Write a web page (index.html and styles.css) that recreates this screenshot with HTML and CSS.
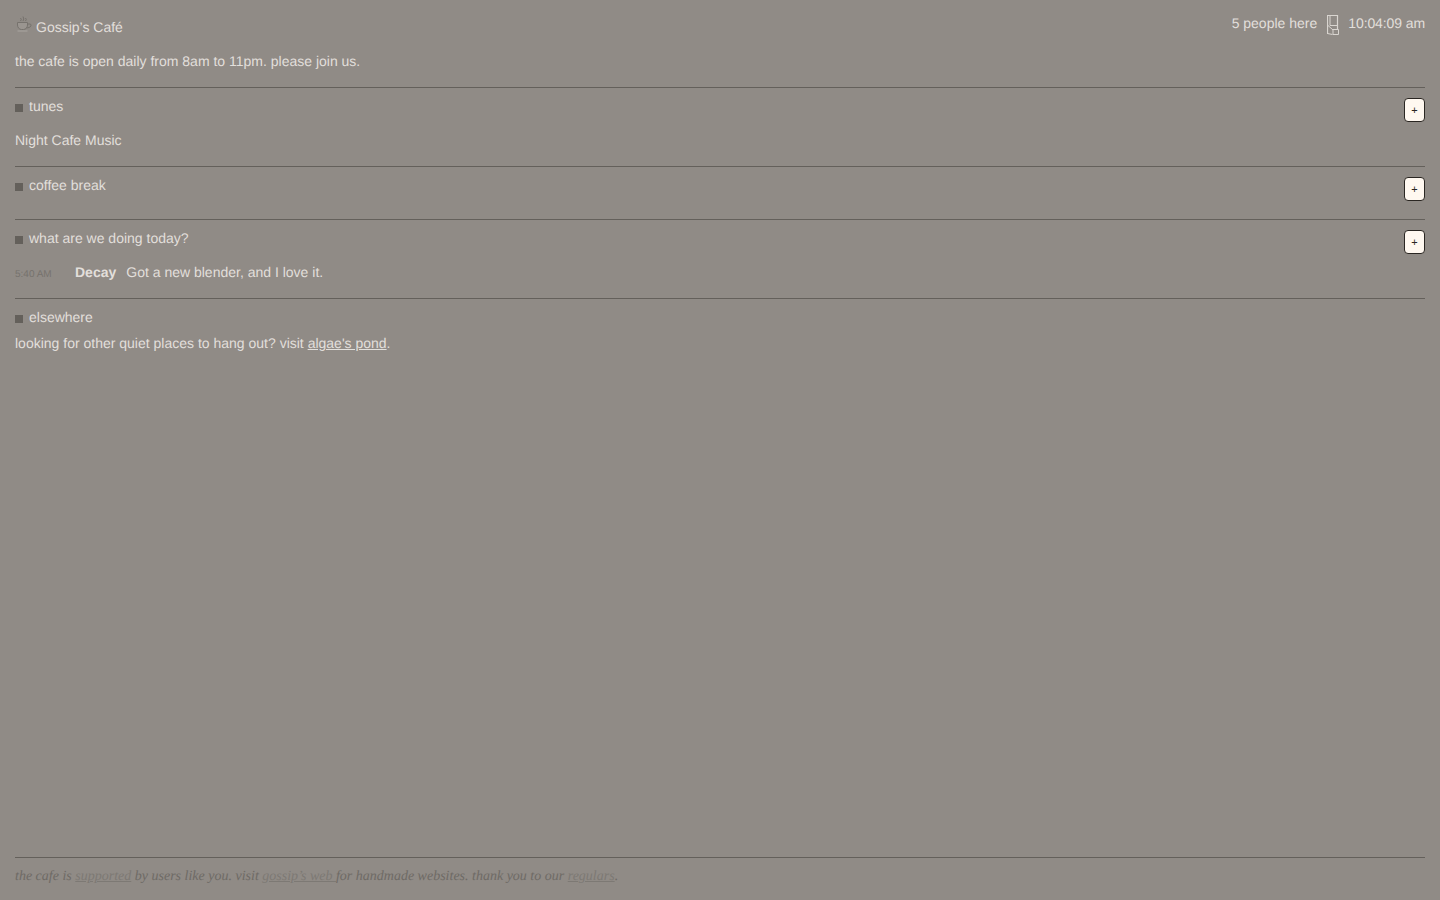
FILE: index.html
```html
<!DOCTYPE html>
<html lang="en">
<head>
    <meta charset="UTF-8">
    <title>Gossip's Café</title>
    <link rel="stylesheet" href="styles.css">
</head>
<body>
    <div class="page">
        <header class="top">
            <div class="brand">
                <svg class="cup" width="17" height="17" viewBox="0 0 17 17" fill="none" stroke="#76726d" stroke-width="1">
                    <path d="M4.500 5l.8-1.500-.8-1.500M7 5l.8-2-.8-2.500M9.500 5l.8-1.500-.8-1.500" stroke="#75716c"/>
                    <path d="M1.500 6.500h10v2.500c0 2.500-1.800 4.500-4 4.500h-2c-2.200 0-4-2-4-4.500z" fill="#9a9590"/>
                    <path d="M11.500 8h2.500c1.500 0 1.500 3-1 3.500l-2.500 .5"/>
                    <path d="M1.500 15h10" stroke="#a9a5a0"/>
                </svg>
                <span class="brand-name">Gossip’s Café</span>
            </div>
            <div class="status">
                <span>5 people here</span>
                <svg class="door" width="12" height="20" viewBox="0 0 12 20" fill="none" stroke="#d9d5d0" stroke-width="1">
                    <path d="M.5 19V.5h10v13.500" stroke-width="1.200"/>
                    <path d="M3 1v9.500h7.500"/>
                    <path d="M1 10.500l5 4.500v4.500M.5 18.500l5 1M6 14.500h5.500v5H6"/>
                </svg>
                <span class="clock">10:04:09 am</span>
            </div>
        </header>
        <p class="intro">the cafe is open daily from 8am to 11pm. please join us.</p>

        <section class="room">
            <div class="room-head">
                <h2 class="room-title"><span class="square"></span>tunes</h2>
                <button class="add" type="button">+</button>
            </div>
            <p class="line">Night Cafe Music</p>
        </section>

        <section class="room">
            <div class="room-head">
                <h2 class="room-title"><span class="square"></span>coffee break</h2>
                <button class="add" type="button">+</button>
            </div>
        </section>

        <section class="room">
            <div class="room-head">
                <h2 class="room-title"><span class="square"></span>what are we doing today?</h2>
                <button class="add" type="button">+</button>
            </div>
            <div class="post">
                <span class="post-time">5:40 AM</span>
                <span class="post-author">Decay</span>
                <span class="post-text">Got a new blender, and I love it.</span>
            </div>
        </section>

        <section class="room room-last">
            <h2 class="room-title"><span class="square"></span>elsewhere</h2>
            <p class="visit">looking for other quiet places to hang out? visit <a href="#">algae's pond</a>.</p>
        </section>

        <footer class="foot">
            the cafe is <a href="#">supported</a> by users like you. visit <a href="#">gossip’s web </a>for handmade websites. thank you to our <a href="#">regulars</a>.
        </footer>
    </div>
</body>
</html>
```

FILE: styles.css
```css
html, body {
    height: 100%;
}
body {
    margin: 0;
    background: #908b86;
    color: #e2dfdb;
    font-family: "Liberation Sans", Arial, sans-serif;
    font-size: 14px;
    line-height: 16px;
    text-rendering: geometricPrecision;
}
.page {
    box-sizing: border-box;
    height: 100vh;
    padding: 0 15px;
    display: flex;
    flex-direction: column;
}
p {
    margin: 0;
}
a {
    color: inherit;
}
.top {
    display: flex;
    justify-content: space-between;
    height: 53px;
}
.brand {
    display: flex;
    padding-top: 19px;
    height: 20px;
}
.cup {
    margin: 0 3px 0 1px;
    position: relative;
    top: -3px;
}
.status {
    display: flex;
    align-items: flex-start;
    padding-top: 15px;
}
.door {
    margin: 0 9px 0 10px;
}
.clock {
    letter-spacing: -.1px;
}
.intro {
    height: 34px;
}
.room {
    border-top: 1px solid #64605b;
    padding-top: 10px;
    padding-bottom: 18px;
}
.room-head {
    display: flex;
    justify-content: space-between;
    height: 24px;
}
.room-title {
    margin: 0;
    font-size: 14px;
    font-weight: normal;
    display: flex;
    align-items: center;
    height: 16px;
}
.square {
    width: 8px;
    height: 8px;
    background: #64605b;
    margin: 4px 6px 0 0;
}
.add {
    box-sizing: border-box;
    width: 21px;
    height: 24px;
    padding: 0;
    border: 1px solid #2a2622;
    border-radius: 4px;
    background: #fff8f0;
    color: #2a2622;
    font-family: "Liberation Sans", Arial, sans-serif;
    font-size: 11px;
    line-height: 20px;
}
.line {
    margin-top: 10px;
}
.post {
    display: flex;
    align-items: baseline;
    margin-top: 10px;
}
.post-time {
    width: 60px;
    font-size: 10px;
    line-height: 10px;
    color: #76726d;
}
.post-author {
    font-weight: bold;
    margin-right: 10px;
}
.room-last {
    flex: 1;
    padding-bottom: 0;
}
.visit {
    margin-top: 10px;
}
.foot {
    border-top: 1px solid #64605b;
    height: 43px;
    padding-top: 11px;
    box-sizing: border-box;
    font-family: "Liberation Serif", "Times New Roman", serif;
    font-style: italic;
    color: #6e6a65;
}
.foot a {
    color: #7d7974;
}
```
